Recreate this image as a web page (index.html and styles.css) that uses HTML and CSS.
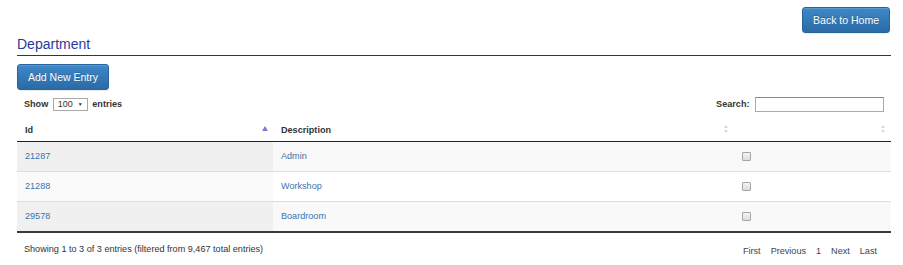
FILE: index.html
```html
<!DOCTYPE html>
<html lang="en">
<head>
    <meta charset="UTF-8">
    <meta name="viewport" content="width=device-width, initial-scale=1.0">
    <title>Department</title>
    <link rel="stylesheet" href="styles.css">
</head>
<body>
    <div class="page">
        <div class="top-bar">
            <a class="btn" href="#">Back to Home</a>
        </div>
        <h2 class="page-title">Department</h2>
        <div class="actions">
            <a class="btn" href="#">Add New Entry</a>
        </div>
        <div class="table-controls">
            <label class="length">Show
                <span class="select-wrap"><select><option>100</option></select></span>
                entries</label>
            <label class="search">Search: <input type="search"></label>
        </div>
        <table class="data-table">
            <thead>
                <tr>
                    <th class="col-id sorting-asc">Id</th>
                    <th class="col-desc sorting">Description</th>
                    <th class="col-check sorting"></th>
                </tr>
            </thead>
            <tbody>
                <tr class="odd">
                    <td class="sorted"><a href="#">21287</a></td>
                    <td><a href="#">Admin</a></td>
                    <td><input type="checkbox"></td>
                </tr>
                <tr class="even">
                    <td class="sorted"><a href="#">21288</a></td>
                    <td><a href="#">Workshop</a></td>
                    <td><input type="checkbox"></td>
                </tr>
                <tr class="odd">
                    <td class="sorted"><a href="#">29578</a></td>
                    <td><a href="#">Boardroom</a></td>
                    <td><input type="checkbox"></td>
                </tr>
            </tbody>
        </table>
        <div class="table-footer">
            <div class="info">Showing 1 to 3 of 3 entries (filtered from 9,467 total entries)</div>
            <div class="paginate">
                <a href="#">First</a>
                <a href="#">Previous</a>
                <a href="#">1</a>
                <a href="#">Next</a>
                <a href="#">Last</a>
            </div>
        </div>
    </div>
</body>
</html>
```

FILE: styles.css
```css
* {
    box-sizing: border-box;
}
body {
    margin: 0;
    font-family: "Liberation Sans", Arial, sans-serif;
    font-size: 9.1px;
    color: #333;
    background-color: #fff;
}
a {
    color: #3b73af;
    text-decoration: none;
}
.page {
    padding: 7px 12px 0 17px;
}
.top-bar {
    display: flex;
    justify-content: flex-end;
    padding-right: 1px;
}
.btn {
    display: inline-flex;
    align-items: center;
    height: 26px;
    padding: 0 10px;
    font-size: 10.5px;
    color: #fff;
    background-image: linear-gradient(#3d89c9, #2b6aa5);
    border: 1px solid #2a639c;
    border-radius: 3px;
    text-shadow: 0 -1px 0 rgba(0, 0, 0, 0.2);
    box-shadow: inset 0 1px 0 rgba(255, 255, 255, 0.15), 0 1px 1px rgba(0, 0, 0, 0.08);
}
.page-title {
    margin: 3px 0 0;
    padding-bottom: 3px;
    font-size: 14px;
    line-height: 16px;
    font-weight: normal;
    color: #2a3a9c;
    border-bottom: 1px solid #2e3260;
}
.actions {
    margin-top: 8px;
}
.table-controls {
    display: flex;
    justify-content: space-between;
    align-items: center;
    height: 16px;
    margin-top: 6px;
    padding: 0 7px;
}
.table-controls label {
    font-weight: bold;
}
.select-wrap {
    position: relative;
    display: inline-block;
    margin: 0 2px;
}
.select-wrap select {
    appearance: none;
    width: 35px;
    height: 13px;
    padding: 0 0 0 4px;
    font-family: inherit;
    font-size: 9px;
    color: #333;
    background-color: #fff;
    border: 1px solid #aaa;
    border-radius: 0;
    vertical-align: middle;
}
.select-wrap::after {
    content: "\25BC";
    position: absolute;
    right: 5px;
    top: 3px;
    font-size: 5px;
    color: #333;
    pointer-events: none;
}
.search input {
    width: 129px;
    height: 15px;
    margin: 0 0 0 3px;
    border: 1px solid #aaa;
    border-top-color: #888;
    vertical-align: middle;
}
.data-table {
    width: 100%;
    margin-top: 1px;
    border-collapse: separate;
    border-spacing: 0;
}
.data-table th {
    position: relative;
    padding: 11px 18px 5px 8px;
    line-height: 12px;
    text-align: left;
    font-weight: bold;
    border-bottom: 1px solid #222;
}
.col-id {
    width: 256px;
}
.col-desc {
    width: 461px;
}
.sorting-asc::after {
    content: "";
    position: absolute;
    right: 5px;
    top: 13px;
    border-left: 3px solid transparent;
    border-right: 3px solid transparent;
    border-bottom: 5px solid #7c7cd0;
}
.sorting::before,
.sorting::after {
    content: "";
    position: absolute;
    right: 6px;
    border-left: 2.5px solid transparent;
    border-right: 2.5px solid transparent;
}
.sorting::before {
    top: 12px;
    border-bottom: 3px solid #d8d8d8;
}
.sorting::after {
    top: 17px;
    border-top: 3px solid #d8d8d8;
}
.data-table td {
    padding: 8px 8px 9px;
    line-height: 12px;
    border-bottom: 1px solid #ddd;
}
.data-table tbody tr:last-child td {
    border-bottom: 2px solid #3a3a3a;
}
.odd td {
    background-color: #f9f9f9;
}
.odd td.sorted {
    background-color: #f0f0f0;
}
.even td.sorted {
    background-color: #fafafa;
}
.data-table input[type="checkbox"] {
    appearance: none;
    display: block;
    width: 9px;
    height: 9px;
    margin: 0;
    border: 1px solid #a5a5a5;
    border-radius: 1px;
    background-image: linear-gradient(#f4f4f4, #dcdcdc);
}
.table-footer {
    display: flex;
    justify-content: space-between;
    padding: 10px 9px 0 7px;
}
.info {
    line-height: 12px;
}
.paginate {
    display: flex;
}
.paginate a {
    padding: 2px 5px;
    line-height: 12px;
    color: #444;
}
```
